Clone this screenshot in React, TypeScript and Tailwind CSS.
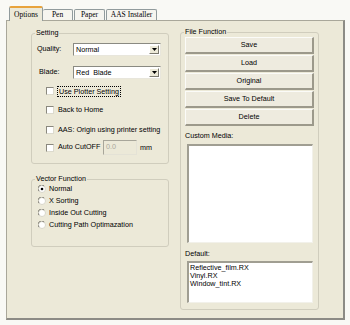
import React from "react";

const Dropdown = ({ value }: { value: string }) => (
  <div className="flex h-[13px] w-[88px] items-stretch border-t border-l border-[#8a8a82] border-r border-b border-r-[#e8e6dc] border-b-[#e8e6dc] bg-white">
    <div className="flex flex-1 items-center whitespace-pre pl-[2px] leading-none">{value}</div>
    <div className="my-[1px] mr-[1px] flex w-[10px] items-center justify-center border-t border-l border-[#ffffff] border-r border-b border-r-[#7a786e] border-b-[#7a786e] bg-[#ece9d8]">
      <svg width="5" height="3" viewBox="0 0 5 3">
        <path d="M0 0h5L2.5 3z" fill="#000" />
      </svg>
    </div>
  </div>
);

const Check = () => (
  <div className="h-[8px] w-[8px] shrink-0 border-t border-l border-[#8a887e] border-r border-b border-r-[#dcdacd] border-b-[#dcdacd] bg-white" />
);

const Radio = ({ on }: { on?: boolean }) => (
  <svg width="8" height="8" viewBox="0 0 8 8" className="shrink-0">
    <circle cx="4" cy="4" r="3.5" fill="#fff" stroke="#d8d6ca" strokeWidth="1" />
    <path d="M1 6.2A3.5 3.5 0 0 1 6.2 1" fill="none" stroke="#85837a" strokeWidth="1" />
    {on && <circle cx="4" cy="4" r="1.3" fill="#000" />}
  </svg>
);

const Btn = ({ label }: { label: string }) => (
  <div className="flex h-[17px] w-[129px] items-center justify-center border-t border-l border-[#fbfbf8] border-r-2 border-b-2 border-r-[#9c998b] border-b-[#9c998b] bg-[#eeebdf] leading-none">
    {label}
  </div>
);

export default function App() {
  return (
    <div className="h-[325px] w-[350px] bg-[#f9f9f5] pl-[6px] pt-[6px] font-['Liberation_Sans',Arial,sans-serif] text-[7.2px] text-black">
      {/* tabs */}
      <div className="flex h-[14px] items-end pl-[3px] font-['Liberation_Serif',serif] text-[7.5px]">
        <div className="relative z-10 -mb-px flex h-[15px] w-[34px] items-center justify-center rounded-t-[2px] border-t-2 border-l border-r border-t-[#e8a33c] border-l-[#919b9c] border-r-[#919b9c] bg-[#ece9d8] leading-none">
          Options
        </div>
        <div className="flex h-[11px] w-[30px] items-center justify-center rounded-t-[2px] border-t border-r border-[#919b9c] bg-[#f6f5ef] leading-none">
          Pen
        </div>
        <div className="ml-[1px] flex h-[11px] w-[31px] items-center justify-center rounded-t-[2px] border-t border-l border-r border-[#919b9c] bg-[#f6f5ef] leading-none">
          Paper
        </div>
        <div className="ml-[1px] flex h-[11px] w-[51px] items-center justify-center rounded-t-[2px] border-t border-l border-r border-[#919b9c] bg-[#f6f5ef] leading-none">
          AAS Installer
        </div>
      </div>

      {/* panel */}
      <div className="flex h-[300px] w-[339px] border-t border-l border-[#a9a79a] border-r-2 border-b-2 border-r-[#8c8b85] border-b-[#8c8b85] bg-[#ece9d8] pl-[24px]">
        {/* left column */}
        <div className="flex w-[138px] flex-col">
          <fieldset className="mt-[7px] rounded-[3px] border border-[#d0cdbd] pb-[8px]">
            <legend className="ml-[3px] px-[1px] leading-[10px]">Setting</legend>
            <div className="mt-[5px] flex h-[13px] items-center">
              <span className="w-[41px] pl-[5px]">Quality:</span>
              <Dropdown value="Normal" />
            </div>
            <div className="mt-[10px] flex h-[13px] items-center">
              <span className="w-[41px] pl-[7px]">Blade:</span>
              <Dropdown value="Red  Blade" />
            </div>
            <div className="mt-[7px] flex h-[10px] items-center gap-[3px] pl-[14px]">
              <Check />
              <span className="border border-dotted border-black px-[1px] leading-[9px]">Use Plotter Setting</span>
            </div>
            <div className="mt-[9px] flex h-[10px] items-center gap-[4px] pl-[14px]">
              <Check />
              <span>Back to Home</span>
            </div>
            <div className="mt-[10px] flex h-[10px] items-center gap-[4px] pl-[14px]">
              <Check />
              <span>AAS: Origin using printer setting</span>
            </div>
            <div className="mt-[5px] flex h-[15px] items-center pl-[14px]">
              <Check />
              <span className="ml-[4px] w-[45px] whitespace-nowrap">Auto CutOFF</span>
              <div className="flex h-[15px] w-[34px] items-center border-t border-l border-[#a8a69a] border-r border-b border-r-[#e4e2d6] border-b-[#e4e2d6] pl-[2px] text-[#aaa89c]">
                0.0
              </div>
              <span className="ml-[3px] mt-[2px]">mm</span>
            </div>
          </fieldset>

          <fieldset className="mt-[11px] rounded-[3px] border border-[#d0cdbd] pb-[15px]">
            <legend className="ml-[3px] px-[1px] leading-[8px]">Vector Function</legend>
            <div className="flex h-[12px] items-center gap-[3px] pl-[6px]">
              <Radio on />
              <span>Normal</span>
            </div>
            <div className="flex h-[12px] items-center gap-[3px] pl-[6px]">
              <Radio />
              <span>X Sorting</span>
            </div>
            <div className="flex h-[12px] items-center gap-[3px] pl-[6px]">
              <Radio />
              <span>Inside Out Cutting</span>
            </div>
            <div className="flex h-[12px] items-center gap-[3px] pl-[6px]">
              <Radio />
              <span>Cutting Path Optimazation</span>
            </div>
          </fieldset>
        </div>

        {/* right column */}
        <div className="ml-[11px] flex w-[139px] flex-col">
          <fieldset className="mt-[7px] rounded-[3px] border border-[#d0cdbd] pb-[6px]">
            <legend className="ml-[3px] px-[1px] leading-[8px]">File Function</legend>
            <div className="ml-[4px] mt-[1px] flex flex-col gap-[1px]">
              <Btn label="Save" />
              <Btn label="Load" />
              <Btn label="Original" />
              <Btn label="Save To Default" />
              <Btn label="Delete" />
            </div>
            <div className="ml-[4px] mt-[5px] leading-[9px]">Custom Media:</div>
            <div className="ml-[6px] mt-[4px] h-[99px] w-[126px] border-t-2 border-l-2 border-[#a09e92] border-r border-b border-r-[#f2f1ea] border-b-[#f2f1ea] bg-white" />
            <div className="ml-[4px] mt-[6px] leading-[9px]">Default:</div>
            <div className="ml-[6px] mt-[3px] h-[42px] w-[126px] border-t-2 border-l-2 border-[#a09e92] border-r border-b border-r-[#f2f1ea] border-b-[#f2f1ea] bg-white pl-[1px] pt-[1px] leading-[8px]">
              <div>Reflective_film.RX</div>
              <div>Vinyl.RX</div>
              <div>Window_tint.RX</div>
            </div>
          </fieldset>
        </div>
      </div>
    </div>
  );
}
